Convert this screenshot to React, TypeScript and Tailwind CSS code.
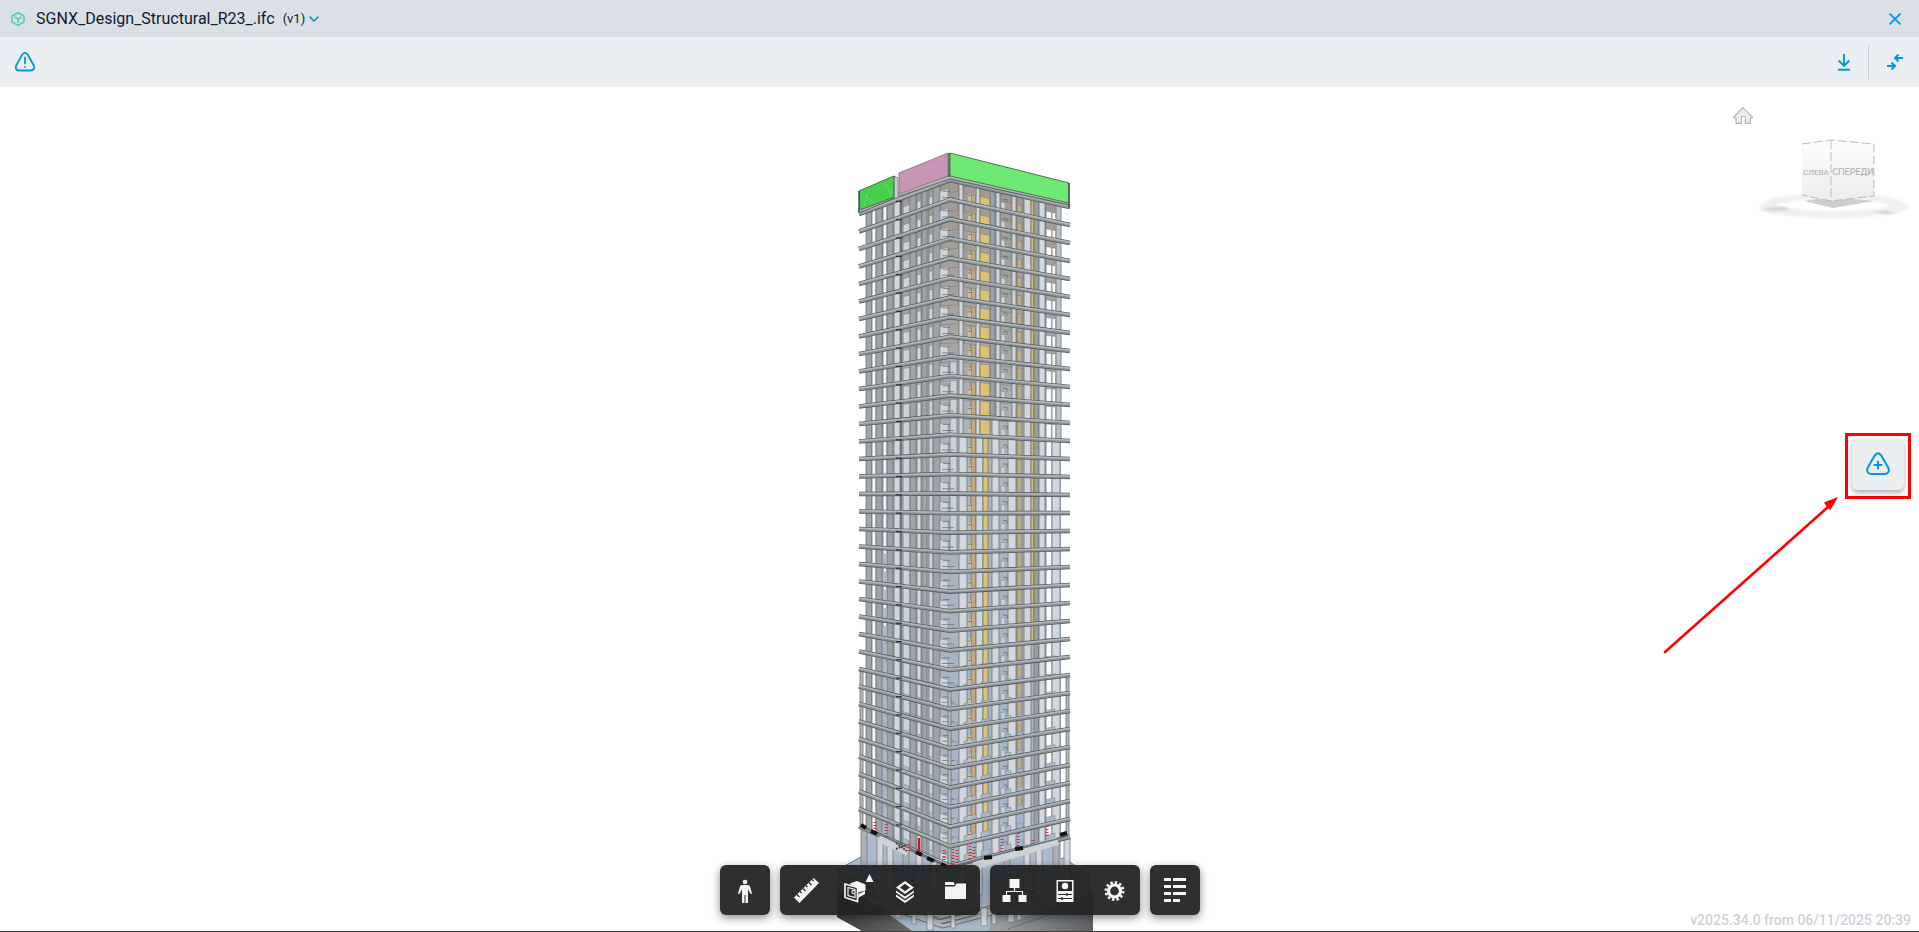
import { ReactNode } from "react";

// floor lines of the tower: y at the left edge, the near corner and the right edge
const FLOORS = 36;
const floorY = (i: number) => ({
    left: 214 + 17.5 * i,
    corner: 180 + 19.6 * i,
    right: 207 + 18 * i,
});

const yAt = (x: number, i: number) => {
    const f = floorY(i);
    return x < 950
        ? f.left + ((x - 860) / 90) * (f.corner - f.left)
        : f.corner + ((x - 950) / 119) * (f.right - f.corner);
};

const bay = (x1: number, x2: number, i: number, top = 0, bottom = 1) => {
    const at = (x: number, t: number) => yAt(x, i + t).toFixed(1);
    return `${x1},${at(x1, top)} ${x2},${at(x2, top)} ${x2},${at(x2, bottom)} ${x1},${at(x1, bottom)}`;
};

type Column = [x1: number, x2: number, color: string, from?: number, to?: number];

const columns: Column[] = [
    [866, 872, "#a0a4a7"],
    [872, 876, "#f8f9fa"],
    [876, 882, "#a0a4a7"],
    [883, 887, "#f4f6f7", 0, 24],
    [887, 893, "#9ca1a4"],
    [894, 900, "#cfd6dd"],
    [903, 910, "#cbd2d9"],
    [910, 916, "#9fa4a8"],
    [917, 921, "#d3dae0"],
    [922, 927, "#9fa4a8"],
    [929, 933, "#cdd4da"],
    [933, 940, "#9fa3a7"],
    [950, 957, "#cbd2d9", 9, 19],
    [959, 963, "#d0d6dc", 0, 13],
    [959, 967, "#d1d7dd", 13],
    [971, 976, "#bfa985", 0, 34],
    [976, 980, "#d0d6dc", 0, 13],
    [976, 983, "#d0d6dc", 13],
    [980, 990, "#dcc273", 0, 13],
    [983, 988, "#dfc56d", 13, 34],
    [990, 995, "#9ca1a7", 0, 12],
    [992, 999, "#d1d7dd", 12],
    [996, 1000, "#ced4da", 0, 12],
    [1012, 1016, "#cfd5db", 0, 12],
    [1008, 1016, "#d1d7dd", 12],
    [1017, 1022, "#c1ab84", 0, 33],
    [1024, 1031, "#ced5db"],
    [1031, 1034, "#d9ba59", 0, 24],
    [1034, 1039, "#999ea4"],
    [1039, 1045, "#d1d8de"],
    [1046, 1052, "#fcfcfc"],
    [1052, 1056, "#fdfdfd", 0, 13],
    [1056, 1061, "#bcc2c7", 0, 13],
    [1052, 1060, "#d1d7dd", 13],
];

// stretches between the columns where the underside of the slab shows
const ceilings: [x1: number, x2: number][] = [
    [903, 909],
    [917, 921],
    [929, 933],
    [941, 958],
    [964, 976],
    [981, 990],
    [1001, 1011],
    [1017, 1023],
    [1046, 1055],
];

function Tower() {
    const floors = Array.from({ length: FLOORS }, (_, i) => i);

    return (
        <svg viewBox="820 87 280 844" preserveAspectRatio="xMidYMin slice" className="h-full w-[280px]" role="img" aria-label="SGNX structural model">
            <defs>
                <linearGradient id="inside" gradientUnits="userSpaceOnUse" x1="0" y1="180" x2="0" y2="880">
                    <stop offset="0" stopColor="#a19993" />
                    <stop offset="0.25" stopColor="#a9a7a3" />
                    <stop offset="0.38" stopColor="#adb5bb" />
                    <stop offset="0.7" stopColor="#a8b5c4" />
                    <stop offset="1" stopColor="#a6b6ca" />
                </linearGradient>
                <linearGradient id="wallLeft" x1="0" y1="0" x2="1" y2="0">
                    <stop offset="0" stopColor="#3f4244" />
                    <stop offset="1" stopColor="#77797b" />
                </linearGradient>
                <linearGradient id="wallRight" x1="0" y1="0" x2="1" y2="0">
                    <stop offset="0" stopColor="#a3a6a8" />
                    <stop offset="1" stopColor="#5f6265" />
                </linearGradient>
            </defs>

            {/* podium */}
            <polygon points="837,870 861,857 1069,862 1089,877 1093,898 1093,931 862,931 837,917" fill="#9aa0a5" />
            <polygon points="837,870 861,857 950,880 1064,858 1090,876 943,925" fill="#b3c2d2" stroke="#777c80" />
            <polygon points="837,884 837,917 862,931 943,931 943,926" fill="url(#wallLeft)" />
            <polygon points="880,908 905,902 990,912 990,931 912,931" fill="#a9b9cc" />
            <polygon points="985,931 1093,893 1093,931" fill="url(#wallRight)" />
            <path d="M837 887 939 922 990 910 1088 877M837 881 941 917 985 905 1086 872M870 901 943 926 1040 900" fill="none" stroke="#686d70" strokeWidth="5" />
            <path d="M837 887 939 922 990 910 1088 877M837 881 941 917 985 905 1086 872M870 901 943 926 1040 900" fill="none" stroke="#b8bdc1" strokeWidth="3" />
            {[895, 912, 927, 951, 981, 992, 1008, 1017].map((x, i) => (
                <rect key={x} x={x} y={908} width={i % 2 ? 4 : 6} height={i < 3 ? 10 + i * 6 : 26 - i * 2} fill="#d0d6db" stroke="#7b8084" strokeWidth="0.7" />
            ))}
            <path d="M1008 929 1093 900M850 910 893 928" stroke="#45484b" strokeWidth="0.7" strokeDasharray="2 1" />

            {/* ground level, below the last slab */}
            <polygon points="866,822 950,864 1061,837 1061,880 950,915 866,880" fill="#acbacb" />
            {[861, 877, 887, 903, 916, 931, 946, 959, 976, 1004, 1024, 1036, 1053, 1064].map((x, i) => (
                <polygon key={x} points={`${x},${yAt(x, 35)} ${x + 6},${yAt(x + 6, 35)} ${x + 6},895 ${x},895`} fill={i % 3 ? "#d0d6db" : "#aab0b4"} stroke="#7c8287" strokeWidth="0.8" />
            ))}

            {/* interior and columns, floor by floor */}
            {floors.slice(0, 35).map((i) => (
                <g key={i}>
                    <polygon points={bay(866, 950, i)} fill="url(#inside)" />
                    <polygon points={bay(950, 1061, i)} fill="url(#inside)" />
                    {columns.map(([x1, x2, color, from = 0, to = 35], k) =>
                        i >= from && i < to ? (
                            <polygon key={k} points={bay(x1, x2, i)} fill={color} stroke="#6f7477" strokeWidth="0.8" />
                        ) : null
                    )}
                    {/* looking up at the ceilings above eye level, down at the floors below it */}
                    {i < 13 && ceilings.map(([x1, x2]) => (
                        <polygon key={x1} points={bay(x1, x2, i, 0, 0.5 - i * 0.03)} fill="url(#inside)" stroke="#77767a" strokeWidth="0.5" />
                    ))}
                    {i > 17 && ceilings.map(([x1, x2]) => (
                        <polygon key={x1} points={bay(x1, x2, i, 1.1 - (i - 14) * 0.025, 1)} fill="#a8b7c9" stroke="#7f868d" strokeWidth="0.5" />
                    ))}
                    {/* windows and partitions seen between the columns */}
                    <polygon points={bay(940, 948, i, i < 20 ? 0.4 : 0.5, 0.95)} fill="#cfd6dd" stroke="#858b90" strokeWidth="0.6" />
                    <polygon points={bay(968, 971, i, 0.5, 0.95)} fill="#c7bea8" />
                    <polygon points={bay(1001, 1005, i, 0.55, 0.95)} fill="#ccd3d9" stroke="#858b90" strokeWidth="0.6" />
                    {i > 18 && <polygon points={bay(884, 887, i, 0.3, 1)} fill="#a8b8ca" />}
                    <path d={`M942 ${yAt(942, i + 0.75)}h12M943 ${yAt(943, i + 0.45)}h7`} stroke="#63686b" strokeWidth="0.7" />
                    <path d={`M1003 ${yAt(1003, i + 0.4)}h4v3M968 ${yAt(968, i + 0.6)}h4`} fill="none" stroke="#5f6468" strokeWidth="0.7" />
                    <path d={`M901 ${yAt(901, i)}V${yAt(901, i + 1)}`} stroke="#5a5f62" strokeWidth="1.3" />
                    {i >= 26 && (
                        <>
                            <polygon points={bay(860, 863, i)} fill="#b5babd" stroke="#6d7275" strokeWidth="0.8" />
                            <polygon points={bay(1066, 1069, i)} fill="#b5babd" stroke="#6d7275" strokeWidth="0.8" />
                            <polygon points={bay(948, 951, i)} fill="#b5bbc0" stroke="#6d7275" strokeWidth="0.8" />
                        </>
                    )}
                </g>
            ))}

            {/* slabs */}
            {floors.map((i) => {
                const f = floorY(i);
                const line = `M859 ${f.left}L897 ${yAt(897, i)}L902 ${yAt(902, i)}L950 ${f.corner}L1070 ${f.right}`;
                return (
                    <g key={i} fill="none">
                        <path d={line} stroke="#575c5f" strokeWidth="4.6" />
                        <path d={line} stroke="#8b9093" strokeWidth="3" />
                        <path d={line} stroke="#b3b8bc" strokeWidth="1.5" transform="translate(0 -0.7)" />
                        <path d={`M896 ${yAt(896, i) + 1}h6`} stroke="#303335" strokeWidth="1.2" />
                    </g>
                );
            })}

            {/* transfer floor with its reinforcement */}
            <path d="M879 838 908 852M974 866 1058 841" stroke="#ced2d5" strokeWidth="8" />
            <path d="M861 826 950 867 1068 836" fill="none" stroke="#6a6f72" strokeWidth="1.5" />
            <path d="M861 825 866 828M871 831 877 834M916 852 922 855M927 858 934 861M941 864 947 867M984 858 992 857M1015 849 1023 848M1060 835 1067 833" stroke="#111" strokeWidth="4" />
            <g stroke="#c92f3d" strokeWidth="3" strokeDasharray="1 2">
                <path d="M875 822v9M886 824v13M909 844v8M944 850v12M953 849v16M957 850v14M970 846v13M974 847v11M1002 839v14M1018 833v14M1033 840v5M1047 826v12" />
            </g>
            <path d="M919 838v13" stroke="#e0121c" strokeWidth="2" />
            <path d="M896 843l11 8M896 849l10-4" stroke="#4e4144" strokeWidth="2" strokeDasharray="2 1" />

            {/* crown */}
            <path d="M859 211 897 195 950 177 1069 203" fill="none" stroke="#66696b" strokeWidth="5" />
            <path d="M859 211 897 195 950 177 1069 203" fill="none" stroke="#b4b8ba" strokeWidth="2.5" />
            <polygon points="894,176 898,178 898,198 894,198" fill="#c9cdd0" stroke="#777b7d" strokeWidth="0.8" />
            <polygon points="859,191 894,176 894,197 860,210" fill="#48cf50" stroke="#4d6650" />
            <path d="M865 196l12 9M867 194l-3 12M885 184l6 9" stroke="#7fdc85" strokeWidth="0.6" />
            <polygon points="899,173 948,153 948,176 899,194" fill="#c795b5" stroke="#8a707f" strokeWidth="0.8" />
            <polygon points="950,153 1069,183 1069,203 950,176" fill="#6eea74" stroke="#50744f" />
            <path d="M949 153v24M859 191v22M1069 183v25" stroke="#484b4c" strokeWidth="1.4" />
        </svg>
    );
}

function ViewCube() {
    return (
        <div className="absolute top-5 right-2 flex items-start gap-1">
            <button aria-label="Home" className="h-[17px] w-5">
                <svg viewBox="0 0 20 17" className="h-full w-full" fill="#ececec" stroke="#b4b4b4" strokeWidth="1.1" strokeLinejoin="round">
                    <path d="M10 .7 19.3 10v1h-2v5.4h-5V9.5H8.5v6.9H3V11H.7v-1z" />
                </svg>
            </button>
            <svg viewBox="1757 135 154 86" className="mt-7 h-[86px] w-[154px]">
                <defs>
                    <linearGradient id="face" x1="0" y1="0" x2="0" y2="1">
                        <stop offset="0" stopColor="#fdfdfd" />
                        <stop offset="1" stopColor="#ededee" />
                    </linearGradient>
                    <filter id="soft"><feGaussianBlur stdDeviation="1.2" /></filter>
                </defs>
                <path fillRule="evenodd" d="M1759 207a75 14 0 0 1 150 0a75 11 0 0 1-150 0M1778 205a58 8 0 0 0 112 0a58 8 0 0 0-112 0" fill="#f0f0f0" filter="url(#soft)" />
                <g fill="#d4d4d4" filter="url(#soft)">
                    <polygon points="1760,210 1772,207 1786,207 1790,210 1772,211" />
                    <polygon points="1872,211 1888,211 1897,214 1884,214" />
                </g>
                <polygon points="1804,201 1831,197 1874,201 1833,208" fill="#cdcdcd" />
                <polygon points="1802,144 1831,140 1831,201 1802,195" fill="url(#face)" />
                <polygon points="1831,140 1874,144 1874,196 1831,201" fill="url(#face)" />
                <path d="M1802 144 1831 140 1874 144V196L1831 201 1802 195M1831 140V201" fill="none" stroke="#b9bbbe" strokeDasharray="9 3" />
                <g fill="#b4b8bd" className="font-['Roboto',sans-serif] font-medium" textAnchor="middle">
                    <text x="1816" y="175" fontSize="8">СЛЕВА</text>
                    <text x="1853" y="175" fontSize="9">СПЕРЕДИ</text>
                </g>
            </svg>
        </div>
    );
}

function ToolButton({ label, children }: { label: string; children: ReactNode }) {
    return (
        <button aria-label={label} className="flex size-[50px] items-center justify-center text-[#f4f4f4]">
            <svg viewBox="0 0 50 50" className="size-full" fill="currentColor">{children}</svg>
        </button>
    );
}

function ToolGroup({ children }: { children: ReactNode }) {
    return <div className="flex rounded-md bg-[#222222]/94 shadow-[0_3px_10px_rgba(0,0,0,0.45)]">{children}</div>;
}

function Toolbar() {
    return (
        <div className="absolute inset-x-0 bottom-4 flex justify-center gap-2.5">
            <ToolGroup>
                <ToolButton label="First person">
                    <circle cx="25" cy="17" r="2.3" />
                    <path d="M22 20h6q1.5 0 2 1.5l2 7-1.5.5-2.5-5V38h-2.5v-8h-1v8H22V24l-2.5 5-1.5-.5 2-7q.5-1.5 2-1.5z" />
                </ToolButton>
            </ToolGroup>
            <ToolGroup>
                <ToolButton label="Measure">
                    <path d="M14 32.5 33.5 13 39 18 19.5 38z" />
                    <path d="m17 29.5 2.5 2.5M20 26.5l1.5 1.5M23 23.5l2.5 2.5M26 20.5l1.5 1.5M29 17.5l2.5 2.5M32 14.5l1.5 1.5" stroke="#2b2b2b" strokeWidth="1.3" />
                </ToolButton>
                <ToolButton label="Section">
                    <path d="m20 18.5 7-2.5 8.5 3.5v6l-7 2zM28.5 29l6.5-3v3l-7 4z" />
                    <path d="m15 19 12.5 3.5v14L15 32.5z" fill="#2b2b2b" stroke="currentColor" strokeWidth="1.7" />
                    <path d="m18 22.5 7 2v8l-7-2z" fill="none" stroke="currentColor" strokeWidth="1.1" />
                    <path d="m25 26-3-.5V28l3 1" fill="none" stroke="currentColor" />
                    <path d="m39.5 9 4 8h-8z" />
                </ToolButton>
                <ToolButton label="Layers">
                    <path fillRule="evenodd" d="m25 16 9 6.5-9 6.5-9-6.5zm0 2.700-5 3.800 5 3.800 5-3.800z" />
                    <path d="m16 25.5 9 6 9-6v2L25 34l-9-6.5zM16 29.5l9 6 9-6v2.200L25 38l-9-6.300z" />
                </ToolButton>
                <ToolButton label="Files">
                    <path d="M15 17h8.500l1 1.500v1.500H15zM15 21.500h9.500l2-3H36V34H15z" />
                </ToolButton>
            </ToolGroup>
            <ToolGroup>
                <ToolButton label="Model tree">
                    <path d="M19.5 14h10v9h-10zM12.5 30h8v7h-8zM28.5 30h8v7h-8z" />
                    <path d="M24.5 23v3.5M16.5 30v-3.5h16V30" fill="none" stroke="currentColor" strokeWidth="1.2" />
                </ToolButton>
                <ToolButton label="Properties">
                    <path fillRule="evenodd" d="M16.5 15h17v22h-17zm1.500 1.500v9.500h14v-9.500zM18 29v1h14v-1zM18 33v1h14v-1z" />
                    <circle cx="25" cy="21" r="3.2" />
                    <path d="M27 28v3M22 32v3" stroke="#2b2b2b" strokeWidth="1.3" />
                </ToolButton>
                <ToolButton label="Settings">
                    <circle cx="24.5" cy="26" r="6" fill="none" stroke="currentColor" strokeWidth="3.2" />
                    <circle cx="24.5" cy="26" r="8.5" fill="none" stroke="currentColor" strokeWidth="3" strokeDasharray="2.45 2" />
                </ToolButton>
            </ToolGroup>
            <ToolGroup>
                <ToolButton label="Object list">
                    <path d="M14 13h7v3h-7zM23 13h13v3H23zM14 20h7v3h-7zM23 20h13v3H23zM14 27h7v3h-7zM23 27h13v3H23zM14 34h7v3h-7zM23 34h7v3h-7z" />
                </ToolButton>
            </ToolGroup>
        </div>
    );
}

function CreateIssue() {
    return (
        <div className="absolute top-[41%] right-2 flex items-start gap-[7px]">
            <svg viewBox="0 0 175 157" className="pointer-events-none mt-16 h-[157px] w-[175px]">
                <path d="M2 155 165 10" stroke="#fe0000" strokeWidth="2.6" strokeLinecap="round" />
                <path d="m175 0-7.5 13-3.5-2.500-3-5z" fill="#fe0000" />
            </svg>
            <div className="border-3 border-[#fe0000] px-1 pt-0.5 pb-1.5">
                <button aria-label="Create issue" className="flex size-[52px] items-center justify-center rounded-md bg-[#ebeff2] text-[#0696d7] shadow-[0_3px_5px_rgba(0,0,0,0.3)]">
                    <svg viewBox="0 0 24 24" className="size-6" fill="none" stroke="currentColor" strokeWidth="2" strokeLinecap="round">
                        <path d="M8.8 3.4q3.2-4.2 6.4 0l7 12.2q2.2 5.4-3.2 6.4H5q-5.4-1-3.2-6.4z" />
                        <path d="M12 9.500v7M8.500 13h7" />
                    </svg>
                </button>
            </div>
        </div>
    );
}

export default function App() {
    return (
        <div className="flex h-screen flex-col overflow-hidden bg-white font-['Roboto',sans-serif]">
            <header className="flex h-[37px] shrink-0 items-center bg-[#dae0e6] pr-[18px] pl-[11px]">
                <svg viewBox="0 0 14 14" className="size-3.5" fill="none" stroke="#50d0ac" strokeWidth="1.6" strokeLinejoin="round">
                    <path d="M7 .8 13 4v6l-6 3.200L1 10V4zM3.500 5 7 7l3.500-2M7 7v3.700" />
                </svg>
                <h1 className="ml-[11px] text-base text-[#0f1b2e]">SGNX_Design_Structural_R23_.ifc</h1>
                <button className="ml-2 flex items-center gap-1 text-[13px] text-[#0f1b2e]">
                    (v1)
                    <svg viewBox="0 0 10 6" className="h-1.5 w-2.5" fill="none" stroke="#0696d7" strokeWidth="1.6">
                        <path d="m.6.6 4.400 4.400L9.400.6" />
                    </svg>
                </button>
                <button aria-label="Close" className="ml-auto text-[#0696d7]">
                    <svg viewBox="0 0 12 12" className="size-3" fill="none" stroke="currentColor" strokeWidth="1.8">
                        <path d="m.6.6 10.800 10.800M11.400.6.6 11.400" />
                    </svg>
                </button>
            </header>

            <div className="flex h-[50px] shrink-0 items-center bg-[#ebeff2] pr-4 pl-[15px] text-[#0696d7]">
                <button aria-label="Issues">
                    <svg viewBox="0 0 20 20" className="size-5" fill="none" stroke="currentColor" strokeWidth="1.8" strokeLinecap="round">
                        <path d="M7.3 2.5q2.700-3.400 5.400 0l6 10.700q1.800 4.500-2.700 5.300H4q-4.500-.8-2.700-5.300z" />
                        <path d="M10 5.500v6M10 14.800v.2" />
                    </svg>
                </button>
                <button aria-label="Download" className="ml-auto">
                    <svg viewBox="0 0 12 17" className="h-[17px] w-3" fill="none" stroke="currentColor" strokeWidth="1.9">
                        <path d="M6 0v12M.7 6.500 6 12l5.300-5.500M0 15.800h12" />
                    </svg>
                </button>
                <div className="mx-[18px] h-[34px] w-px bg-[#c6ccd1]" />
                <button aria-label="Compare">
                    <svg viewBox="0 0 16 16" className="size-4" fill="none" stroke="currentColor" strokeWidth="2">
                        <path d="M16 4H8M11.500.5 8 4l3.500 3.500M0 12h8M4.500 8.500 8 12l-3.500 3.500" />
                    </svg>
                </button>
            </div>

            <main className="relative flex min-h-0 flex-1 justify-center border-b border-[#3c3c3c]">
                <Tower />
                <ViewCube />
                <CreateIssue />
                <Toolbar />
                <p className="absolute right-2 bottom-px text-sm font-medium text-[#cdd2d8]">v2025.34.0 from 06/11/2025 20:39</p>
            </main>
        </div>
    );
}
